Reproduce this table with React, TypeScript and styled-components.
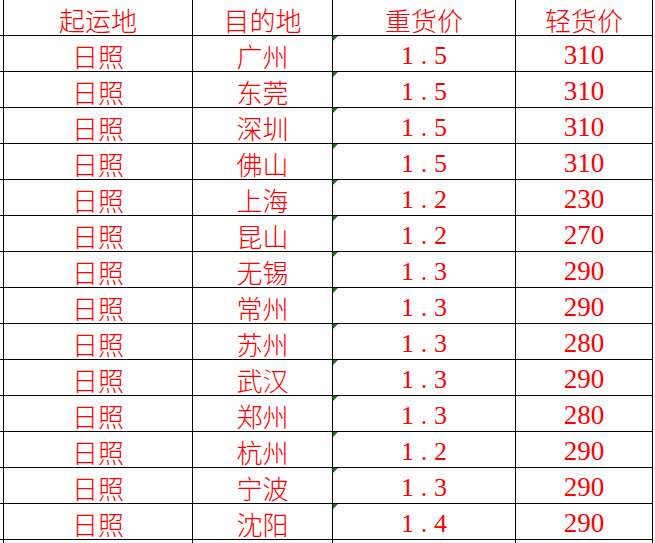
import React from "react";
import styled, { createGlobalStyle } from "styled-components";

const Global = createGlobalStyle`
  html, body { margin: 0; padding: 0; background: #fff; }
  body { width: 655px; height: 543px; overflow: hidden; }
`;

const Sheet = styled.div`
  display: grid;
  grid-template-columns: 4px 189px 140px 183px 137px 1fr;
  grid-auto-rows: 36px;
  width: 655px;
  height: 543px;
  overflow: hidden;
`;

const Cell = styled.div<{ $edge?: boolean; $kind?: "cjk" | "dec" | "int" }>`
  position: relative;
  box-sizing: border-box;
  border-right: ${(p) => (p.$edge ? "none" : "1px solid #000")};
  border-bottom: ${(p) => (p.$edge ? "none" : "1px solid #000")};
  display: flex;
  align-items: flex-end;
  justify-content: center;
  color: #ff0000;
  font-size: ${(p) => (p.$kind === "int" ? "27px" : "26px")};
  line-height: 1;
  padding-bottom: ${(p) => (p.$kind === "cjk" ? "2px" : "2px")};
  font-family: ${(p) =>
    p.$kind === "cjk"
      ? '"Noto Sans CJK SC", sans-serif'
      : '"Liberation Serif", "Noto Sans CJK SC", serif'};
  font-weight: ${(p) => (p.$kind === "cjk" ? 300 : 400)};
  white-space: nowrap;
`;

const Decimal = styled.span`
  letter-spacing: 0.26em;
  padding-left: 0.26em;
`;

const Flag = styled.span`
  position: absolute;
  left: 0;
  top: 0;
  width: 0;
  height: 0;
  border-top: 5px solid #1a7a1a;
  border-right: 5px solid transparent;
`;

const rows: [string, string, string, string][] = [
  ["日照", "广州", "1.5", "310"],
  ["日照", "东莞", "1.5", "310"],
  ["日照", "深圳", "1.5", "310"],
  ["日照", "佛山", "1.5", "310"],
  ["日照", "上海", "1.2", "230"],
  ["日照", "昆山", "1.2", "270"],
  ["日照", "无锡", "1.3", "290"],
  ["日照", "常州", "1.3", "290"],
  ["日照", "苏州", "1.3", "280"],
  ["日照", "武汉", "1.3", "290"],
  ["日照", "郑州", "1.3", "280"],
  ["日照", "杭州", "1.2", "290"],
  ["日照", "宁波", "1.3", "290"],
  ["日照", "沈阳", "1.4", "290"],
];

export default function App() {
  return (
    <>
      <Global />
      <Sheet>
        <Cell />
        <Cell $kind="cjk">起运地</Cell>
        <Cell $kind="cjk">目的地</Cell>
        <Cell $kind="cjk">重货价</Cell>
        <Cell $kind="cjk">轻货价</Cell>
        <Cell $edge />
        {rows.map((r, i) => (
          <React.Fragment key={i}>
            <Cell />
            <Cell $kind="cjk">{r[0]}</Cell>
            <Cell $kind="cjk">{r[1]}</Cell>
            <Cell $kind="dec">
              <Flag />
              <Decimal>{r[2]}</Decimal>
            </Cell>
            <Cell $kind="int">{r[3]}</Cell>
            <Cell $edge />
          </React.Fragment>
        ))}
        <Cell />
        <Cell />
        <Cell />
        <Cell />
        <Cell />
        <Cell $edge />
      </Sheet>
    </>
  );
}
